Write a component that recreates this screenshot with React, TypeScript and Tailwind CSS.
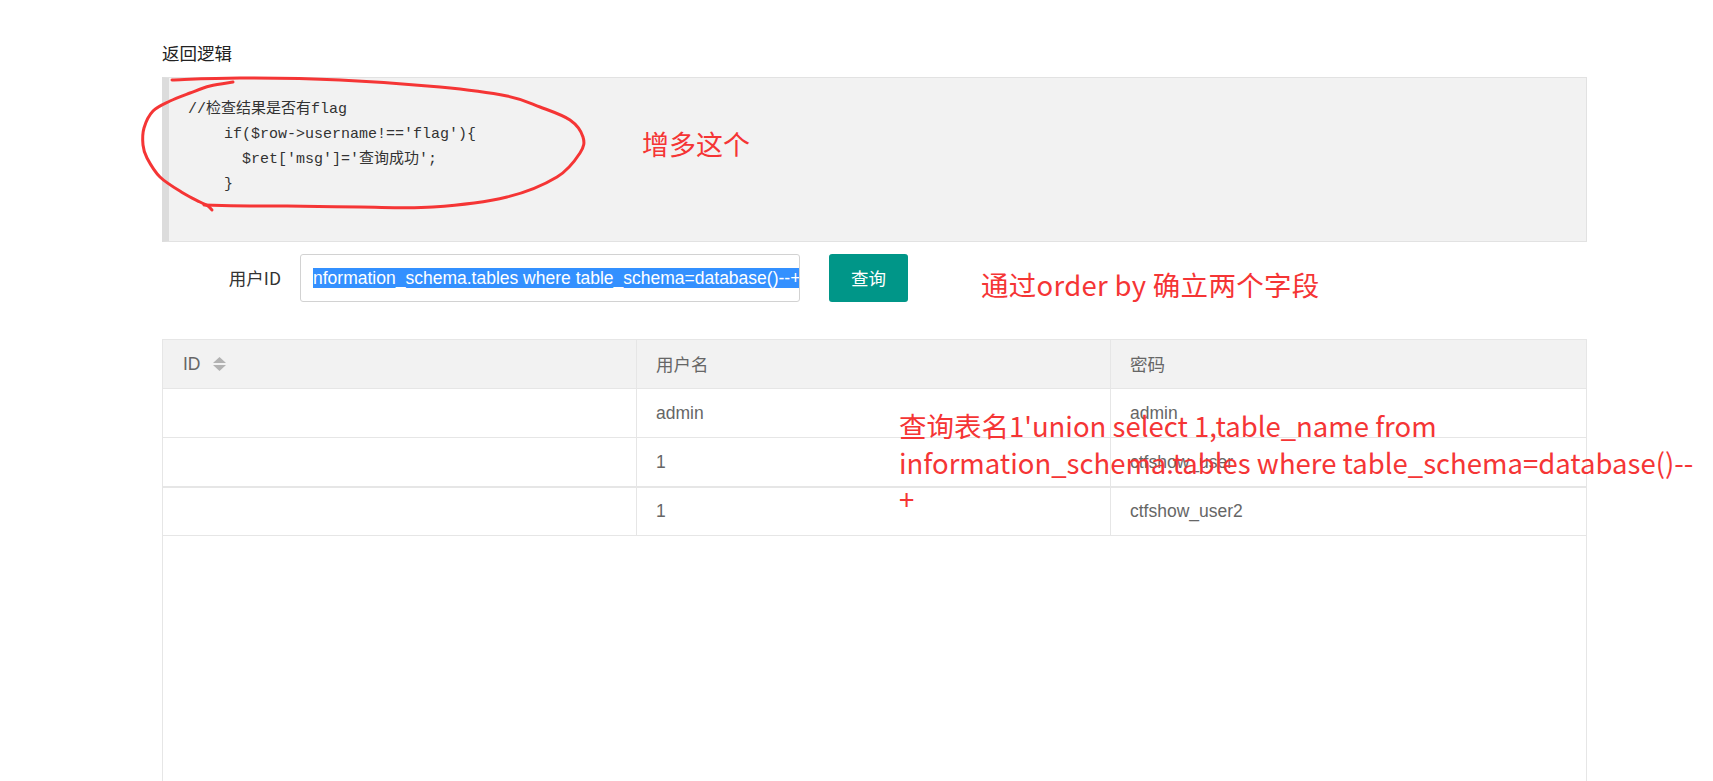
import React from 'react';

const sans = '"Liberation Sans", "Noto Sans CJK SC", Arial, sans-serif';
const cjk = '"Noto Sans CJK SC", "Liberation Sans", sans-serif';

// turns a list of points into a smooth path (catmull-rom -> bezier)
function smooth(pts: number[][]) {
  let d = `M${pts[0][0]},${pts[0][1]}`;
  for (let i = 0; i < pts.length - 1; i++) {
    const p0 = pts[i - 1] || pts[i];
    const p1 = pts[i];
    const p2 = pts[i + 1];
    const p3 = pts[i + 2] || p2;
    const c1x = p1[0] + (p2[0] - p0[0]) / 6;
    const c1y = p1[1] + (p2[1] - p0[1]) / 6;
    const c2x = p2[0] - (p3[0] - p1[0]) / 6;
    const c2y = p2[1] - (p3[1] - p1[1]) / 6;
    d += ` C${c1x},${c1y} ${c2x},${c2y} ${p2[0]},${p2[1]}`;
  }
  return d;
}

const leftArc = [
  [233, 82], [210, 86], [190, 93], [170, 101], [153, 111], [144, 128], [143, 145],
  [147, 158], [160, 177], [183, 193], [200, 202], [208, 206], [212, 210],
];
const rightArc = [
  [204, 205], [250, 206], [287, 206], [360, 207], [433, 207], [507, 197], [557, 177],
  [580, 153], [583, 137], [570, 120], [540, 107], [507, 96], [440, 87], [340, 80],
  [240, 78], [172, 80],
];

const rows = [
  { name: 'admin', pass: 'admin' },
  { name: '1', pass: 'ctfshow_user' },
  { name: '1', pass: 'ctfshow_user2' },
];

function SortIcon() {
  return (
    <svg width="13" height="14" viewBox="0 0 13 14" className="ml-[12px]">
      <polygon points="0,6 6.5,0 13,6" fill="#b2b2b2" />
      <polygon points="0,8 13,8 6.5,14" fill="#b2b2b2" />
    </svg>
  );
}

export default function App() {
  return (
    <div className="relative w-[1713px] h-[781px] overflow-hidden bg-white" style={{ fontFamily: sans }}>
      <div className="pl-[162px] w-[1587px] pt-[40px]">
        <div className="h-[25px] leading-[25px] text-[17.5px] text-[#222]" style={{ fontFamily: cjk }}>
          返回逻辑
        </div>

        <pre
          className="mt-[12px] h-[165px] bg-[#f2f2f2] border border-[#e2e2e2] border-l-[7px] border-l-[#dcdcdc] py-[19px] px-[19px] text-[15px] leading-[25px] text-[#333] whitespace-pre"
          style={{ fontFamily: '"Liberation Mono", "Noto Sans CJK SC", monospace' }}
        >
{`//检查结果是否有flag
    if($row->username!=='flag'){
      $ret['msg']='查询成功';
    }
`}
        </pre>

        <div className="mt-[12px] flex items-center h-[48px]">
          <div className="w-[138px] pr-[19px] text-right text-[17.5px] text-[#333]" style={{ fontFamily: cjk }}>
            用户ID
          </div>
          <div className="w-[500px] h-[48px] border border-[#d2d2d2] rounded-[3px] flex items-center pl-[12px] overflow-hidden whitespace-nowrap">
            <span className="bg-[#3390ff] text-white text-[17.5px] leading-[20px]">
              nformation_schema.tables where table_schema=database()--+
            </span>
          </div>
          <button
            className="ml-[29px] w-[79px] h-[48px] bg-[#009688] text-white text-[17.5px] rounded-[3px]"
            style={{ fontFamily: cjk }}
          >
            查询
          </button>
        </div>

        <div className="mt-[37px] h-[460px] border border-[#e6e6e6] text-[#666] text-[17.5px]">
          <div className="flex h-[49px] bg-[#f2f2f2] border-b border-[#e6e6e6]">
            <div className="w-[473px] flex items-center pl-[20px]">
              ID
              <SortIcon />
            </div>
            <div className="w-[474px] border-l border-[#e6e6e6] flex items-center pl-[19px]" style={{ fontFamily: cjk }}>
              用户名
            </div>
            <div className="flex-1 border-l border-[#e6e6e6] flex items-center pl-[19px]" style={{ fontFamily: cjk }}>
              密码
            </div>
          </div>
          {rows.map((r, i) => (
            <div
              key={i}
              className={
                i === 1
                  ? 'flex h-[50px] border-b-2 border-[#e6e6e6]'
                  : i === 2
                  ? 'flex h-[48px] border-b border-[#e6e6e6]'
                  : 'flex h-[49px] border-b border-[#e6e6e6]'
              }
            >
              <div className="w-[473px]" />
              <div className="w-[474px] border-l border-[#e6e6e6] flex items-center pl-[19px]">{r.name}</div>
              <div className="flex-1 border-l border-[#e6e6e6] flex items-center pl-[19px]">{r.pass}</div>
            </div>
          ))}
        </div>
      </div>

      {/* red annotations drawn on top of the screenshot */}
      <svg className="absolute left-0 top-0 pointer-events-none" width="1713" height="781">
        <path d={smooth(leftArc)} fill="none" stroke="#f53535" strokeWidth="3" strokeLinecap="round" strokeLinejoin="round" />
        <path d={smooth(rightArc)} fill="none" stroke="#f53535" strokeWidth="3" strokeLinecap="round" strokeLinejoin="round" />
      </svg>

      <div className="absolute left-[642px] top-[130px] text-[27px] leading-none text-[#f53535]" style={{ fontFamily: cjk }}>
        增多这个
      </div>
      <div className="absolute left-[981px] top-[271px] text-[27.5px] leading-none tracking-[0.3px] text-[#f53535] whitespace-nowrap" style={{ fontFamily: cjk }}>
        通过order by 确立两个字段
      </div>
      <div className="absolute left-[899px] top-[407px] text-[27.5px] leading-[36.5px] text-[#f53535] whitespace-nowrap" style={{ fontFamily: cjk }}>
        <div>查询表名1'union select 1,table_name from</div>
        <div>information_schema.tables where table_schema=database()--</div>
        <div>+</div>
      </div>
    </div>
  );
}
